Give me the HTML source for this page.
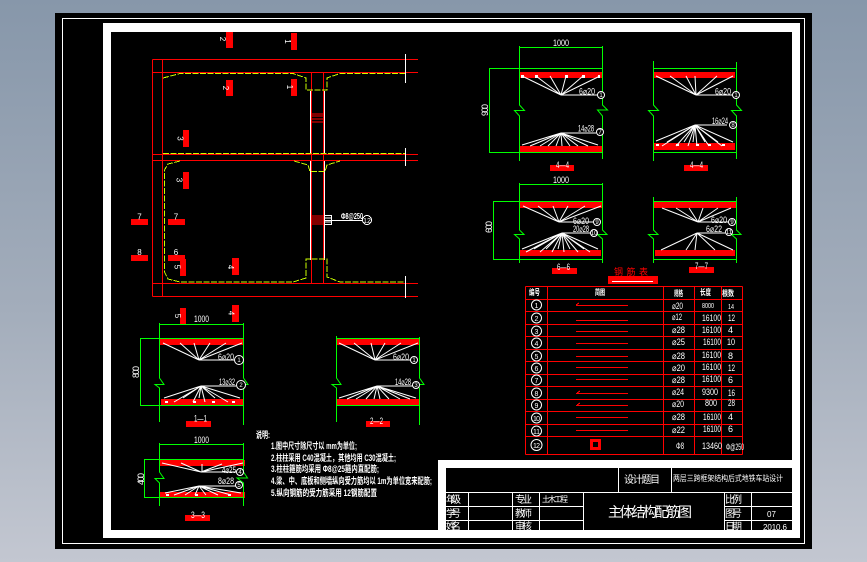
<!DOCTYPE html>
<html lang="zh"><head><meta charset="utf-8"><title>主体结构配筋图</title>
<style>
html,body{margin:0;padding:0;width:867px;height:562px;overflow:hidden;background:#a0a9b8}
svg{display:block}
text{font-family:"Liberation Sans","Noto Sans CJK SC",sans-serif;fill:#fff}
.g{stroke:#0f0;fill:none;stroke-width:1}
.r{stroke:#f00;fill:none;stroke-width:1}
.w{stroke:#fff;fill:none;stroke-width:1}
.f{stroke:#fff;fill:none;stroke-width:1}
.y{stroke:#cf0;fill:none;stroke-width:1;stroke-dasharray:6 1.5}
.c{stroke:#fff;fill:#000;stroke-width:1}
.s{font-size:9px}
.m{font-size:8px;text-anchor:middle}
</style></head><body>
<svg width="867" height="562" viewBox="0 0 867 562" xmlns="http://www.w3.org/2000/svg" shape-rendering="crispEdges">
<defs><linearGradient id="bg" x1="0" y1="0" x2="0" y2="1"><stop offset="0" stop-color="#8797aa"/><stop offset=".55" stop-color="#a3adbb"/><stop offset="1" stop-color="#c3c7d1"/></linearGradient></defs>
<rect width="867" height="562" fill="url(#bg)"/>
<rect x="55" y="13" width="757" height="536" fill="#000"/>
<rect x="62.5" y="18.5" width="742" height="525" class="w"/>
<rect x="103" y="23" width="697" height="515" fill="#fff"/>
<rect x="111" y="32" width="681" height="498" fill="#000"/>

<!-- plan -->
<g class="r">
<path d="M152.5 59.5H418M152.5 72.5H418M152.5 154.5H418M152.5 160.5H418M152.5 283.5H418M152.5 296.5H418"/>
<path d="M152.5 59.5V296.5M162.5 59.5V296.5M311.5 72.5V283.5M323.5 72.5V283.5"/>
<path d="M312 114H323M312 116H323M312 119H323M312 122H323M312 216H323M312 218H323M312 220H323M312 222H323M312 224H323"/>
</g>
<path class="w" d="M310.5 91V154M324.5 91V154M310.5 161V260M324.5 161V260M405.5 54V83M405.5 148V166M405.5 276V298"/>
<path class="y" d="M163 78L180 73.5H293L306 78V90H327V78L340 73.5H405M163 153.5H405M180 161L168 164L164.5 170V272L168 279L180 282H293L306 278V259H327V277L340 282H405M294 161L308 165L310 171.5H325L327 165L340 161"/>
<path class="w" d="M325 215.5H331.5V224.5H325M325 220.5H362M325 218H331M325 222H331"/>
<circle class="c" cx="367" cy="220" r="4.5"/>
<text x="341" y="219" font-size="8" font-weight="bold" textLength="22" lengthAdjust="spacingAndGlyphs">Φ8@250</text>
<text x="367" y="223" font-size="7" text-anchor="middle">12</text>
<g fill="#f00">
<rect x="226" y="32" width="7" height="16"/><rect x="291" y="33" width="6" height="17"/>
<rect x="226" y="80" width="7" height="16"/><rect x="291" y="79" width="6" height="17"/>
<rect x="183" y="130" width="6" height="17"/><rect x="183" y="172" width="6" height="17"/>
<rect x="131" y="219" width="17" height="6"/><rect x="168" y="219" width="17" height="6"/>
<rect x="131" y="255" width="17" height="6"/><rect x="168" y="255" width="17" height="6"/>
<rect x="180" y="259" width="6" height="17"/><rect x="232" y="258" width="7" height="17"/>
<rect x="180" y="308" width="6" height="17"/><rect x="232" y="305" width="7" height="17"/>
</g>
<g class="m" shape-rendering="auto">
<text transform="translate(220 39) rotate(90)">2</text>
<text transform="translate(285 41.5) rotate(90)">1</text>
<text transform="translate(223 88) rotate(90)">2</text>
<text transform="translate(287 87) rotate(90)">1</text>
<text transform="translate(177.500 138.500) rotate(90)">3</text>
<text transform="translate(176.500 180) rotate(90)">3</text>
<text transform="translate(174.500 267) rotate(90)">5</text>
<text transform="translate(228 267) rotate(90)">4</text>
<text transform="translate(175 316) rotate(90)">5</text>
<text transform="translate(228.500 313) rotate(90)">4</text>
<text x="139.500" y="219.500">7</text><text x="176" y="219.500">7</text><text x="139.500" y="255">8</text><text x="176" y="255">6</text>
</g>

<!-- red bars -->
<g fill="#f00"><rect x="520" y="72" width="82" height="6"/><rect x="520" y="146" width="82" height="6"/>
<rect x="654" y="72" width="81" height="6"/><rect x="654" y="143" width="81" height="7"/>
<rect x="520" y="202" width="83" height="6"/><rect x="520" y="250" width="81" height="6"/>
<rect x="654" y="202" width="83" height="6"/><rect x="655" y="250" width="80" height="6"/>
<rect x="550" y="165" width="24" height="6"/><rect x="684" y="165" width="24" height="6"/>
<rect x="552" y="268" width="25" height="6"/><rect x="689" y="267" width="25" height="6"/>
<rect x="608" y="276" width="50" height="8"/>
<rect x="186" y="421" width="25" height="6"/><rect x="366" y="421" width="24" height="6"/><rect x="185" y="515" width="25" height="6"/>
<rect x="160" y="339" width="84" height="6"/><rect x="337" y="339" width="83" height="6"/>
<rect x="161" y="399" width="82" height="6"/><rect x="337" y="399" width="83" height="6"/>
<rect x="160" y="460" width="85" height="6"/><rect x="160" y="492" width="85" height="6"/>
</g>

<!-- green frames -->
<g shape-rendering="auto">
<path class="g" d="M519.5 46V105L524.5 110.5H514.5L519.5 116V161M602.5 46V105L607.5 110H597.5L602.5 116V159M519.5 47.5H602.5M489.5 68.5H602.5M489.5 152.500H602.5M489.5 68V153"/>
<path class="g" d="M653.5 61V105L658.5 110.5H648.5L653.5 116V161M736.5 62V105L741.5 110.5H731.5L736.5 116V159M653.5 68.5H736.5M653.5 152.5H736.5"/>
<path class="g" d="M519.5 183V230L524 234.5H514.5L519.5 239V263M602.5 183V230L607 234.500H597.5L602.500 239V263M519.5 184.5H602.5M493.5 201.5H602.5M493.5 259.5H602.5M493.5 201V260"/>
<path class="g" d="M653.5 197V230L658 234.5H648.5L653.5 239V263M736.5 197V230L741 234.5H731.5L736.5 239V263M653.5 201.5H736.5M653.5 259.5H736.5"/>
<path class="g" d="M159.5 323V378L164 384.5H155L159.5 388V422M243.5 323V378L248 384.500H238L243.5 388V425M159.5 324.5H243.5M140.5 338.5H243.5M140.5 405.5H243.5M140.5 338V406"/>
<path class="g" d="M336.5 336V378L341 384.5H332L336.5 388V422M419.5 337V378L424 384.5H415L419.5 388V425M336.5 338.5H419.5M336.5 405.5H419.5"/>
<path class="g" d="M159.5 443V472L164 478.5H155L159.5 483V506M243.5 443V472L247.500 478H237L243.5 483V506M159.5 444.5H243.5M144.5 459.5H243.5M144.5 497.5H243.5M144.5 459V498"/>
</g>

<!-- fans -->
<g shape-rendering="auto">
<path class="f" d="M522 76L561 95M536 76L561 95M550 76L561 95M566 76L561 95M583 76L561 95M600 76L561 95M561 95H598"/>
<path class="f" d="M561 133L522 145M561 133L530 146M561 133L540 146M561 133L548 146M561 133L556 146M561 133L562 146M561 133L570 146M561 133L578 146M561 133L588 146M561 133L598 145M561 133H596"/>
<path class="f" d="M656 76L696 95M670 76L696 95M686 76L696 95M695 76L696 95M717 76L696 95M733 76L696 95M696 95H732"/>
<path class="f" d="M695 125L656 141M695 125L662 146M695 125L667 142M695 125L676 146M695 125L684 142M695 125L688 146M695 125L693 142M695 125L697 146M695 125L705 142M695 125L709 146M695 125L718 142M695 125L722 146M695 125L733 142M695 125H727"/>
<path class="f" d="M523 206L559 222M538 206L559 222M553 206L559 222M568 206L559 222M585 206L559 222M601 206L559 222M559 222H596"/>
<path class="f" d="M562 233L522 249M562 233L526 252M562 233L534 249M562 233L540 252M562 233L546 249M562 233L552 252M562 233L558 249M562 233L564 252M562 233L570 249M562 233L578 252M562 233L584 249M562 233L590 252M562 233L598 249M562 233H592"/>
<path class="f" d="M662 208L698 222M676 208L698 222M689 208L698 222M703 208L698 222M718 208L698 222M731 208L698 222M698 222H731"/>
<path class="f" d="M697 233L661 250M697 233L686 250M697 233L695 250M697 233L715 250M697 233L733 250M697 233H725"/>
<path class="f" d="M163 343L199 360M180 343L199 360M194 343L199 360M210 343L199 360M226 343L199 360M242 343L199 360M199 360H238"/>
<path class="f" d="M201 386L164 398M201 386L174 402M201 386L183 398M201 386L193 402M201 386L199 398M201 386L205 402M201 386L215 398M201 386L228 402M201 386L240 398M201 386H236"/>
<path class="f" d="M339 343L375 360M354 343L375 360M371 343L375 360M385 343L375 360M401 343L375 360M418 343L375 360M375 360H412"/>
<path class="f" d="M377 386L339 398M377 386L347 399M377 386L356 399M377 386L366 399M377 386L374 399M377 386L380 399M377 386L389 399M377 386L400 399M377 386L410 399M377 386L416 398M377 386H413"/>
<path class="f" d="M162 463L201 472M181 463L201 472M202 464V472M222 464L201 472M243 463L201 472M201 472H238"/>
<path class="f" d="M199 486L165 493M199 486L174 495M199 486L185 495M199 486L195 495M199 486L206 495M199 486L218 495M199 486L231 495M199 486L241 493M199 486H238"/>
</g>
<g fill="#fff">
<rect x="521" y="75" width="3" height="3"/><rect x="535" y="75" width="3" height="3"/><rect x="565" y="75" width="3" height="3"/><rect x="582" y="75" width="3" height="3"/><rect x="598" y="75" width="2" height="3"/>
<rect x="656" y="144" width="3" height="2"/><rect x="676" y="144" width="3" height="2"/><rect x="696" y="144" width="3" height="2"/><rect x="708" y="144" width="3" height="2"/><rect x="722" y="144" width="3" height="2"/>
<rect x="165" y="401" width="3" height="2"/><rect x="193" y="401" width="3" height="2"/><rect x="212" y="401" width="3" height="2"/><rect x="232" y="401" width="3" height="2"/>
<rect x="166" y="494" width="3" height="2"/><rect x="195" y="494" width="3" height="2"/><rect x="228" y="494" width="3" height="2"/>
</g>
<g shape-rendering="auto">
<circle class="c" cx="601" cy="95" r="3.5"/><circle class="c" cx="600" cy="132" r="3.5"/><circle class="c" cx="736" cy="95" r="3.5"/><circle class="c" cx="733" cy="125" r="3.5"/>
<circle class="c" cx="597" cy="222" r="3.5"/><circle class="c" cx="594" cy="233" r="3.5"/><circle class="c" cx="732" cy="222" r="3.5"/><circle class="c" cx="729" cy="232" r="3.5"/>
<circle class="c" cx="239" cy="360" r="4.5"/><circle class="c" cx="241" cy="385" r="4.5"/><circle class="c" cx="414" cy="360" r="3.5"/><circle class="c" cx="416" cy="385" r="3.5"/>
<circle class="c" cx="240" cy="472" r="3.5"/><circle class="c" cx="239" cy="485" r="3.5"/>
</g>
<g font-size="6" text-anchor="middle">
<text x="601" y="97">1</text><text x="600" y="134">7</text><text x="736" y="97">1</text><text x="733" y="127">8</text>
<text x="597" y="224">9</text><text x="594" y="235">10</text><text x="732" y="224">9</text><text x="729" y="234">11</text>
<text x="239" y="362">1</text><text x="241" y="387">2</text><text x="414" y="362">1</text><text x="416" y="387">3</text>
<text x="240" y="474">4</text><text x="239" y="487">5</text>
</g>
<g class="s" lengthAdjust="spacingAndGlyphs">
<text x="553" y="46" textLength="16" lengthAdjust="spacingAndGlyphs">1000</text>
<text x="553" y="183" textLength="16" lengthAdjust="spacingAndGlyphs">1000</text>
<text x="194" y="322" textLength="15" lengthAdjust="spacingAndGlyphs">1000</text>
<text x="194" y="443" textLength="15" lengthAdjust="spacingAndGlyphs">1000</text>
<text x="579" y="94.5" textLength="16" lengthAdjust="spacingAndGlyphs">6⌀20</text>
<text x="578" y="131.5" textLength="16" lengthAdjust="spacingAndGlyphs">14⌀28</text>
<text x="715" y="94.5" textLength="16" lengthAdjust="spacingAndGlyphs">6⌀20</text>
<text x="712" y="124" textLength="16" lengthAdjust="spacingAndGlyphs">16⌀24</text>
<text x="573" y="224" textLength="16" lengthAdjust="spacingAndGlyphs">6⌀20</text>
<text x="573" y="232" textLength="16" lengthAdjust="spacingAndGlyphs">20⌀28</text>
<text x="711" y="223" textLength="16" lengthAdjust="spacingAndGlyphs">6⌀20</text>
<text x="706" y="232" textLength="16" lengthAdjust="spacingAndGlyphs">6⌀22</text>
<text x="218" y="360" textLength="16" lengthAdjust="spacingAndGlyphs">6⌀20</text>
<text x="219" y="385" textLength="16" lengthAdjust="spacingAndGlyphs">13⌀32</text>
<text x="393" y="360" textLength="16" lengthAdjust="spacingAndGlyphs">6⌀20</text>
<text x="395" y="385" textLength="16" lengthAdjust="spacingAndGlyphs">14⌀28</text>
<text x="222" y="473" textLength="14" lengthAdjust="spacingAndGlyphs">4⌀25</text>
<text x="218" y="484" textLength="16" lengthAdjust="spacingAndGlyphs">8⌀28</text>
<text x="556" y="168" textLength="13" lengthAdjust="spacingAndGlyphs">4—4</text>
<text x="690" y="168" textLength="13" lengthAdjust="spacingAndGlyphs">4—4</text>
<text x="557" y="270" textLength="13" lengthAdjust="spacingAndGlyphs">6—6</text>
<text x="695" y="269" textLength="13" lengthAdjust="spacingAndGlyphs">7—7</text>
<text x="194" y="421.5" textLength="13" lengthAdjust="spacingAndGlyphs">1—1</text>
<text x="370" y="424" textLength="13" lengthAdjust="spacingAndGlyphs">2—2</text>
<text x="191" y="518" textLength="14" lengthAdjust="spacingAndGlyphs">3—3</text>
<text transform="translate(488 116) rotate(-90)" textLength="12">900</text>
<text transform="translate(492 233) rotate(-90)" textLength="12">600</text>
<text transform="translate(139 378) rotate(-90)" textLength="12">800</text>
<text transform="translate(144 485) rotate(-90)" textLength="12">400</text>
</g>
<text x="614" y="275" font-size="9" style="fill:#f00" textLength="34" lengthAdjust="spacing">钢 筋 表</text>
<path class="w" d="M612 281.5H653"/>

<!-- notes -->
<g font-size="9" font-weight="bold">
<text x="256" y="438" textLength="14" lengthAdjust="spacingAndGlyphs">说明:</text>
<text x="271" y="449" textLength="86" lengthAdjust="spacingAndGlyphs">1.图中尺寸除尺寸以 mm为单位;</text>
<text x="271" y="461" textLength="125" lengthAdjust="spacingAndGlyphs">2.柱柱采用 C40混凝土，其他均用 C30混凝土;</text>
<text x="271" y="472" textLength="108" lengthAdjust="spacingAndGlyphs">3.柱柱箍筋均采用 Φ8@25箍内直配筋;</text>
<text x="271" y="484" textLength="161" lengthAdjust="spacingAndGlyphs">4.梁、中、底板和侧墙纵向受力筋均以 1m为单位宽来配筋;</text>
<text x="271" y="496" textLength="106" lengthAdjust="spacingAndGlyphs">5.纵向钢筋的受力筋采用 12钢筋配置</text>
</g>

<!-- table -->
<g class="r">
<path d="M525.5 286.5H742.5M525.5 299.5H742.5M525.5 311.5H742.5M525.5 324.5H742.5M525.5 336.5H742.5M525.5 349.5H742.5M525.5 361.5H742.5M525.5 374.5H742.5M525.5 386.5H742.5M525.5 399.5H742.5M525.5 411.5H742.5M525.5 424.5H742.5M525.5 436.5H742.5M525.5 454.5H742.5"/>
<path d="M525.5 286.5V454.5M547.5 286.5V454.5M663.5 286.5V454.5M694.5 286.5V454.5M721.5 286.5V454.5M742.5 286.5V454.5"/>
<path d="M576 305.5H628M576 320.5H628M576 331.5H628M576 343.5H628M576 356.5H628M576 367.5H628M576 379.5H628M576 393.5H628M576 405.5H628M576 417.5H628M576 430.5H628M576 305L579 303M577 393L580 391M577 405L580 403"/>
</g>
<rect x="590" y="439" width="11" height="11" fill="#f00"/><rect x="593" y="442" width="5" height="5" fill="#000"/>
<g font-size="8" font-weight="bold">
<text x="529" y="295" textLength="11" lengthAdjust="spacingAndGlyphs">编号</text><text x="595" y="295" textLength="10" lengthAdjust="spacingAndGlyphs">简图</text><text x="674" y="296" textLength="9" lengthAdjust="spacingAndGlyphs">规格</text><text x="700" y="295" textLength="11" lengthAdjust="spacingAndGlyphs">长度</text><text x="722" y="296" textLength="12" lengthAdjust="spacingAndGlyphs">根数</text>
</g>
<g shape-rendering="auto">
<circle class="c" cx="536.5" cy="305" r="5"/><circle class="c" cx="536.5" cy="318" r="5"/><circle class="c" cx="536.5" cy="331" r="5"/><circle class="c" cx="536.5" cy="343" r="5"/><circle class="c" cx="536.5" cy="356" r="5"/><circle class="c" cx="536.5" cy="368" r="5"/><circle class="c" cx="536.5" cy="380" r="5"/><circle class="c" cx="536.5" cy="393" r="5"/><circle class="c" cx="536.5" cy="405" r="5"/><circle class="c" cx="536.5" cy="418" r="5"/><circle class="c" cx="536.5" cy="431" r="5"/><circle class="c" cx="536.5" cy="445" r="5.5"/>
</g>
<g font-size="7" text-anchor="middle">
<text x="536.5" y="308">1</text><text x="536.5" y="321">2</text><text x="536.5" y="334">3</text><text x="536.5" y="346">4</text><text x="536.5" y="359">5</text><text x="536.5" y="371">6</text><text x="536.5" y="383">7</text><text x="536.5" y="396">8</text><text x="536.5" y="408">9</text><text x="536.5" y="421" textLength="7">10</text><text x="536.5" y="434" textLength="7">11</text><text x="536.5" y="448" textLength="7">12</text>
</g>
<g font-size="9">
<text x="672" y="309" textLength="11" lengthAdjust="spacingAndGlyphs">⌀20</text><text x="672" y="320" textLength="10" lengthAdjust="spacingAndGlyphs">⌀12</text><text x="672" y="333" textLength="13" lengthAdjust="spacingAndGlyphs">⌀28</text><text x="672" y="345" textLength="13" lengthAdjust="spacingAndGlyphs">⌀25</text><text x="672" y="359" textLength="13" lengthAdjust="spacingAndGlyphs">⌀28</text><text x="672" y="371" textLength="13" lengthAdjust="spacingAndGlyphs">⌀20</text><text x="672" y="383" textLength="13" lengthAdjust="spacingAndGlyphs">⌀28</text><text x="672" y="395" textLength="12" lengthAdjust="spacingAndGlyphs">⌀24</text><text x="672" y="407" textLength="12" lengthAdjust="spacingAndGlyphs">⌀20</text><text x="672" y="420" textLength="13" lengthAdjust="spacingAndGlyphs">⌀28</text><text x="672" y="433" textLength="13" lengthAdjust="spacingAndGlyphs">⌀22</text><text x="676" y="449" textLength="8" lengthAdjust="spacingAndGlyphs">Φ8</text>
<text x="702" y="308" font-size="7" textLength="12" lengthAdjust="spacingAndGlyphs">8000</text><text x="702" y="321" textLength="19" lengthAdjust="spacingAndGlyphs">16100</text><text x="702" y="333" textLength="19" lengthAdjust="spacingAndGlyphs">16100</text><text x="703" y="345" textLength="18" lengthAdjust="spacingAndGlyphs">16100</text><text x="702" y="358" textLength="19" lengthAdjust="spacingAndGlyphs">16100</text><text x="702" y="370" textLength="19" lengthAdjust="spacingAndGlyphs">16100</text><text x="702" y="382" textLength="19" lengthAdjust="spacingAndGlyphs">16100</text><text x="702" y="395" textLength="16" lengthAdjust="spacingAndGlyphs">9300</text><text x="705" y="406" textLength="12" lengthAdjust="spacingAndGlyphs">800</text><text x="703" y="420" textLength="18" lengthAdjust="spacingAndGlyphs">16100</text><text x="703" y="432" textLength="18" lengthAdjust="spacingAndGlyphs">16100</text><text x="702" y="449" textLength="20" lengthAdjust="spacingAndGlyphs">13460</text>
<text x="728" y="309" font-size="7" textLength="6" lengthAdjust="spacingAndGlyphs">14</text><text x="728" y="321" textLength="7" lengthAdjust="spacingAndGlyphs">12</text><text x="728" y="333">4</text><text x="727" y="345" textLength="8" lengthAdjust="spacingAndGlyphs">10</text><text x="728" y="359">8</text><text x="728" y="371" textLength="7" lengthAdjust="spacingAndGlyphs">12</text><text x="728" y="383">6</text><text x="728" y="396" textLength="7" lengthAdjust="spacingAndGlyphs">16</text><text x="728" y="406" textLength="7" lengthAdjust="spacingAndGlyphs">28</text><text x="728" y="420">4</text><text x="728" y="432">6</text><text x="726" y="450" textLength="18" lengthAdjust="spacingAndGlyphs">Φ@250</text>
</g>

<!-- title block -->
<rect x="438" y="460" width="354" height="8" fill="#fff"/>
<rect x="438" y="460" width="8" height="70" fill="#fff"/>
<rect x="446" y="468" width="346" height="62" fill="#000"/>
<path class="w" d="M446 492.5H792M446 506.5H583M446 520.5H583M724 506.5H792M724 520.5H792M618.5 468V492M671.5 468V492M468.5 492V530M512.5 492V530M539.5 492V530M583.5 492V530M724.5 492V530M751.5 492V530"/>
<g font-size="10">
<text x="624" y="483" textLength="36">设计题目</text>
<text x="673" y="481" font-size="8" textLength="110" lengthAdjust="spacingAndGlyphs">两层三跨框架结构后式地铁车站设计</text>
<text x="446" y="503" textLength="15">年级</text><text x="446" y="517" textLength="15">学号</text><text x="446" y="530" textLength="15">姓名</text>
<text x="515" y="503" textLength="17">专业</text><text x="515" y="517" textLength="17">教师</text><text x="515" y="530" textLength="17">审核</text>
<text x="542" y="502" font-size="8" textLength="26">土木工程</text>
<text x="608" y="517" font-size="14" textLength="84">主体结构配筋图</text>
<text x="725" y="503" textLength="17">比例</text><text x="725" y="517" textLength="17">图号</text><text x="725" y="530" textLength="17">日期</text>
<text x="767" y="517" font-size="8">07</text><text x="763" y="530" font-size="8" textLength="24">2010.6</text>
</g>
</svg>
</body></html>
